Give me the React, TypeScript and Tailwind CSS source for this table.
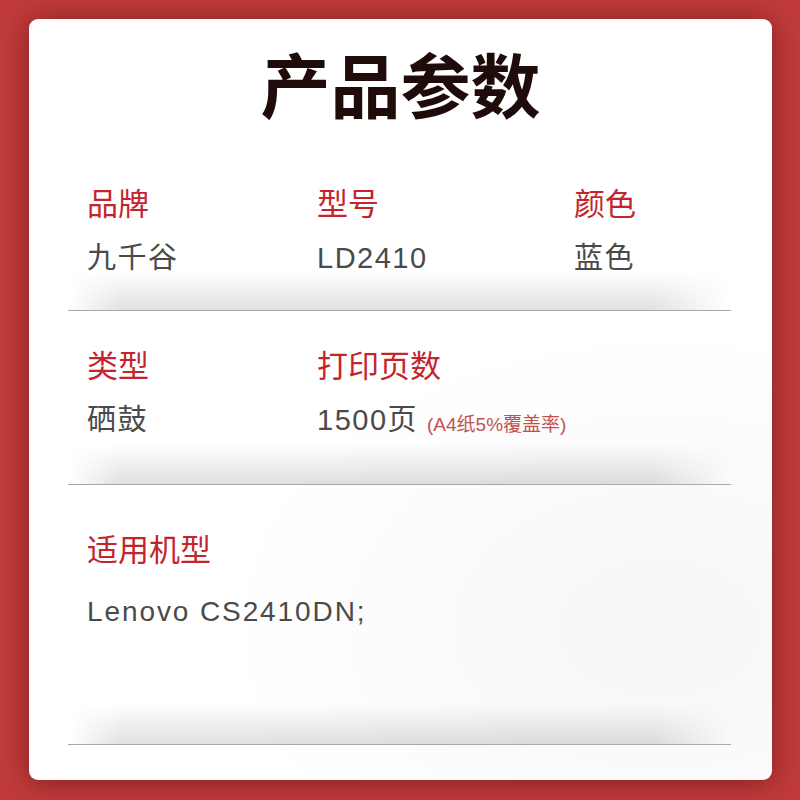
const cjk = "font-['Liberation_Sans','Noto_Sans_CJK_SC',sans-serif]";

type Cell = { label: string; value: string; note?: string; width: string };

const rowOne: Cell[] = [
  { label: "品牌", value: "九千谷", width: "w-[230px]" },
  { label: "型号", value: "LD2410", width: "w-[257px]" },
  { label: "颜色", value: "蓝色", width: "w-[150px]" },
];

const rowTwo: Cell[] = [
  { label: "类型", value: "硒鼓", width: "w-[230px]" },
  { label: "打印页数", value: "1500页", note: "(A4纸5%覆盖率)", width: "w-[380px]" },
];

function Divider() {
  return (
    <div>
      <div className="h-[40px] bg-[linear-gradient(to_top,rgba(0,0,0,0.12),rgba(0,0,0,0))] [mask-image:linear-gradient(to_right,transparent,black_8%,black_88%,transparent)]" />
      <div className="h-px bg-[#a9a9a9]" />
    </div>
  );
}

function Row({ cells, top, gap }: { cells: Cell[]; top: string; gap: string }) {
  return (
    <div className={`flex pl-[19px] ${top}`}>
      {cells.map((c) => (
        <div key={c.label} className={c.width}>
          <div className="text-[31px] leading-[31px] text-[#c3252c]">{c.label}</div>
          <div className={`${gap} flex items-end text-[29px] leading-[29px] tracking-[1.5px] text-[#4a4a4a]`}>
            {c.value}
            {c.note && (
              <span className="ml-[9px] mb-[1px] text-[19px] leading-[19px] tracking-normal text-[#c2514f]">{c.note}</span>
            )}
          </div>
        </div>
      ))}
    </div>
  );
}

export default function App() {
  return (
    <div className={`w-[800px] h-[800px] bg-[#c13b3b] pt-[19px] pl-[29px] ${cjk}`}>
      <div className="w-[743px] h-[761px] rounded-[9px] bg-white shadow-[0_2px_28px_rgba(80,8,8,0.55)] bg-[radial-gradient(ellipse_60%_40%_at_85%_80%,rgba(0,0,0,0.035),rgba(0,0,0,0))]">
        <div className="pt-[34px] text-center text-[70px] leading-[72px] font-bold text-[#1f0b09]">
          产品参数
        </div>

        <div className="px-[39px] pr-[41px]">
          <Row cells={rowOne} top="pt-[64px]" gap="mt-[24px]" />
          <div className="mt-[-3px]">
            <Divider />
          </div>

          <Row cells={rowTwo} top="pt-[40px]" gap="mt-[24px]" />
          <div className="mt-[9px]">
            <Divider />
          </div>

          <div className="pl-[19px] pt-[50px]">
            <div className="text-[31px] leading-[31px] text-[#c3252c]">适用机型</div>
            <div className="mt-[31px] text-[28px] leading-[29px] tracking-[1.9px] text-[#4a4a4a]">Lenovo CS2410DN;</div>
          </div>
          <div className="mt-[78px]">
            <Divider />
          </div>
        </div>
      </div>
    </div>
  );
}
